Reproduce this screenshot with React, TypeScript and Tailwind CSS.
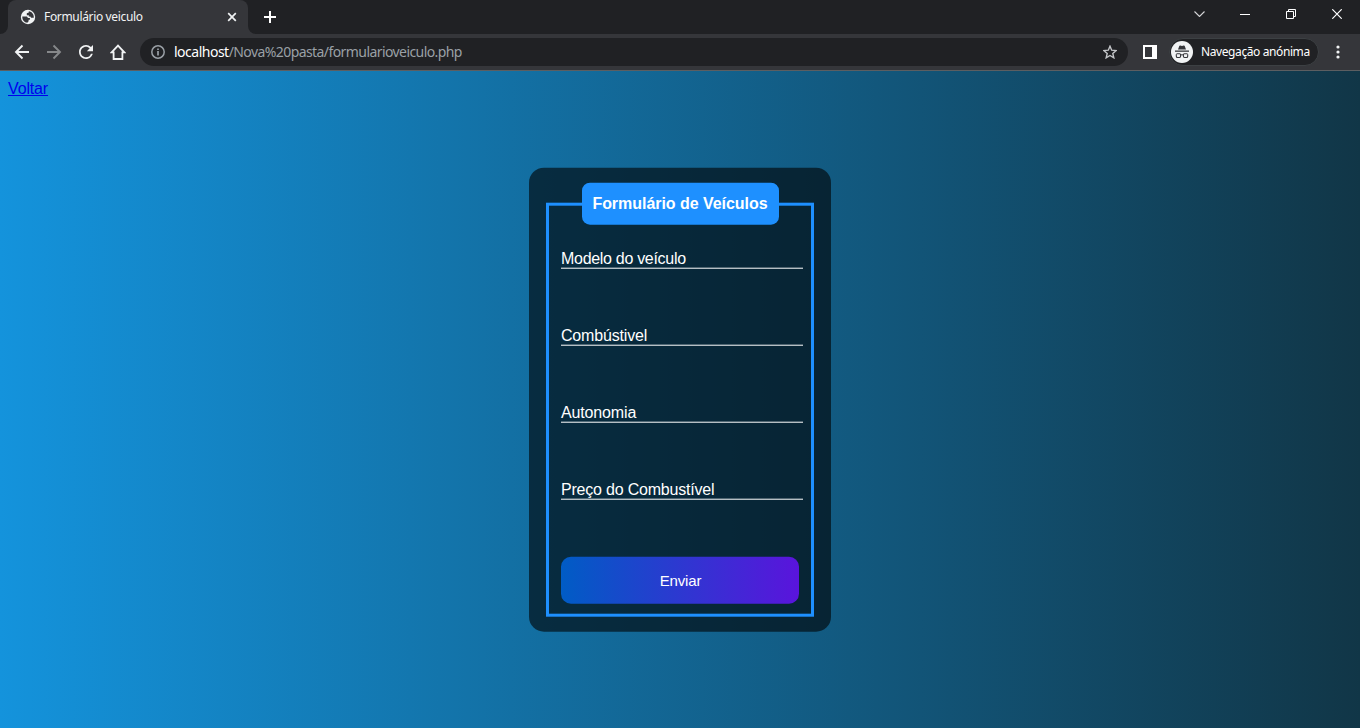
import React from "react";

const fields = [
  { label: "Modelo do veículo", tracking: "tracking-[-0.3px]" },
  { label: "Combústivel", tracking: "tracking-[-0.18px]" },
  { label: "Autonomia", tracking: "tracking-[-0.15px]" },
  { label: "Preço do Combustível", tracking: "tracking-[-0.2px]" },
];

function TabStrip() {
  return (
    <div className="flex h-[34px] shrink-0 items-stretch bg-[#202124]">
      <div className="flex w-2 items-end bg-[#35363a]">
        <div className="h-full w-2 rounded-br-lg bg-[#202124]" />
      </div>
      <div className="flex w-60 items-center rounded-t-lg bg-[#35363a] pl-3">
        <svg className="size-4 shrink-0" viewBox="0 0 16 16">
          <circle cx="8" cy="8" r="7.2" fill="#f1f3f4" />
          <path d="M2.300 7.500h3.900c1 0 1.500.7 1.700 1.500h2v1.800H8.600v1.500l-1.300 1.500C4.200 13.500 2.200 11 2.300 7.500z" fill="#35363a" />
          <path d="M8.800 2.300v1.300L6.800 4.300v1.900h2v1.300h1.500l.8 1.200h2.700c.2-3.200-1.800-6-5-6.400z" fill="#35363a" />
        </svg>
        <span className="ml-2 w-[183px] whitespace-nowrap text-[12px] leading-4 tracking-[-0.34px] text-[#f1f3f4]">Formulário veiculo</span>
        <svg className="size-[10px] shrink-0" viewBox="0 0 10 10" stroke="#f1f3f4" strokeWidth="1.7">
          <path d="M1.200 1.200l7.600 7.600M8.800 1.200l-7.600 7.600" />
        </svg>
      </div>
      <div className="w-2 bg-[#35363a]">
        <div className="h-full w-2 rounded-bl-lg bg-[#202124]" />
      </div>
      <svg className="ml-2 mt-[11px] size-3" viewBox="0 0 12 12" fill="none" stroke="#fff" strokeWidth="2">
        <path d="M6 0v12M0 6h12" />
      </svg>
      <div className="ml-auto flex h-7 items-center text-white">
        <svg className="mr-[35px] h-[6px] w-[11px]" viewBox="0 0 11 6" fill="none" stroke="#d5d6d8" strokeWidth="1.1">
          <path d="M.5.500l5 5 5-5" />
        </svg>
        <svg className="mr-9 h-px w-[10px]" viewBox="0 0 10 1"><path fill="#fff" d="M0 0h10v1H0z" /></svg>
        <svg className="mr-9 size-[10px]" viewBox="0 0 10 10" fill="none" stroke="#fff">
          <path d="M.5 2.500h7v7h-7zM2.500 2V.500h7v7H8" />
        </svg>
        <svg className="mr-[18px] size-[10px]" viewBox="0 0 10 10" stroke="#fff" strokeWidth="1.2">
          <path d="M.3.300l9.400 9.400M9.700.300L.3 9.700" />
        </svg>
      </div>
    </div>
  );
}

function Toolbar() {
  return (
    <div className="flex h-[37px] shrink-0 items-center border-b border-[#5c5e61] bg-[#35363a]">
      <svg className="ml-[14px] size-4" viewBox="0 0 16 16" fill="none" stroke="#f1f3f4" strokeWidth="1.9">
        <path d="M15 8H2.500M8.500 1.500L2 8l6.500 6.500" />
      </svg>
      <svg className="ml-4 size-4" viewBox="0 0 16 16" fill="none" stroke="#86888a" strokeWidth="1.9">
        <path d="M1 8h12.500M7.500 1.500L14 8l-6.500 6.500" />
      </svg>
      <svg className="ml-[17px] size-[14px]" viewBox="4 4 16 16" fill="#f1f3f4">
        <path d="M17.650 6.350A7.960 7.960 0 0 0 12 4c-4.420 0-7.990 3.580-7.990 8s3.570 8 7.990 8c3.730 0 6.840-2.550 7.730-6h-2.080A5.990 5.990 0 0 1 12 18c-3.310 0-6-2.690-6-6s2.690-6 6-6c1.660 0 3.140.69 4.220 1.780L13 11h7V4z" />
      </svg>
      <svg className="ml-[17px] size-4" viewBox="0 0 16 16" fill="none" stroke="#f1f3f4" strokeWidth="1.8">
        <path d="M1.600 8.400L8 1.600l6.400 6.800h-2V15H3.600V8.400z" />
      </svg>
      <div className="ml-[14px] flex h-7 w-[988px] items-center rounded-full bg-[#202124] pl-[11px] pr-[11px]">
        <svg className="size-[14px]" viewBox="0 0 14 14" fill="none" stroke="#9aa0a6" strokeWidth="1.5">
          <circle cx="7" cy="7" r="6.2" />
          <path d="M7 6v4.500M7 3.500v1.500" strokeWidth="1.7" />
        </svg>
        <span className="ml-[9px] whitespace-nowrap text-[14px] leading-5 tracking-[-0.58px] text-[#9aa0a6]"><span className="tracking-[-0.5px] text-white">localhost</span>/Nova%20pasta/formularioveiculo.php</span>
        <svg className="ml-auto size-[14px]" viewBox="0 0 14 14" fill="none" stroke="#c4c6c9" strokeWidth="1.4">
          <path d="M7 1.200l1.700 4 4.400.4-3.300 2.900 1 4.300L7 10.500l-3.800 2.300 1-4.300L.9 5.600l4.400-.4z" />
        </svg>
      </div>
      <svg className="ml-[15px] size-[14px]" viewBox="0 0 14 14">
        <path fill="#fff" fillRule="evenodd" d="M0 0h14v14H0zM2 2v10h7V2z" />
      </svg>
      <div className="ml-3 flex h-7 w-[150px] items-center rounded-full border border-[#3c4043] bg-[#202124] pl-[2px]">
        <svg className="-ml-px size-[22px] shrink-0" viewBox="0 0 22 22">
          <circle cx="11" cy="11" r="11" fill="#f1f3f4" />
          <path d="M7 8.500l1.300-3.500q.2-.6 1-.4l1.700.4 1.700-.4q.8-.2 1 .4L15 8.500z" fill="#35363a" />
          <path d="M4 9.500h14v1.300H4z" fill="#35363a" />
          <path d="M5.500 12.700h3.200q.9 0 .9 1v1.600q0 1.200-1.200 1.200H6.600q-1.300 0-1.300-1.300v-2M16.500 12.700h-3.200q-.9 0-.9 1v1.600q0 1.200 1.200 1.200h1.800q1.300 0 1.300-1.300v-2M9.600 14q1.400-.6 2.800 0" fill="none" stroke="#35363a" strokeWidth="1.1" />
        </svg>
        <span className="ml-2 whitespace-nowrap text-[12px] leading-4 tracking-[-0.4px] text-white">Navegação anónima</span>
      </div>
      <svg className="ml-[17px] h-[14px] w-1" viewBox="0 0 4 14" fill="#f1f3f4">
        <circle cx="2" cy="2" r="1.6" /><circle cx="2" cy="7" r="1.6" /><circle cx="2" cy="12" r="1.6" />
      </svg>
    </div>
  );
}

export default function App() {
  return (
    <div className="flex h-[728px] w-[1360px] flex-col overflow-hidden font-['Noto_Sans','Open_Sans',sans-serif]">
      <TabStrip />
      <Toolbar />
      <main className="flex flex-1 flex-col bg-[linear-gradient(to_right,rgb(20,147,220),rgb(17,54,71))] font-['Liberation_Sans',Arial,sans-serif] text-[16px] leading-[18px]">
        <a href="#" className="ml-2 mt-[9px] self-start tracking-[-0.15px] text-[#0000ee] underline">Voltar</a>
        <form className="mt-[70px] h-[464px] w-[302px] -translate-y-[0.3px] self-center rounded-[15px] bg-black/60 px-[17px] pt-[15px] text-white">
          <fieldset className="h-[434px] w-[268px] min-w-0 border-[3px] border-[#1e90ff] px-3">
            <legend className="mx-auto h-[42px] w-[197px] rounded-lg bg-[#1e90ff] text-center font-bold leading-[42px] tracking-[-0.04px]">Formulário de Veículos</legend>
            <div className="flex w-[242px] flex-col gap-14 pt-[23px]">
              {fields.map(({ label, tracking }) => (
                <label key={label} className={`flex h-[21px] items-end border-b border-white ${tracking}`}>{label}</label>
              ))}
            </div>
            <button type="button" className="mt-[57px] h-[47px] w-[238px] rounded-[10px] bg-[linear-gradient(to_right,rgb(0,92,197),rgb(90,20,220))] pl-px text-[15px] tracking-[-0.15px]">Enviar</button>
          </fieldset>
        </form>
      </main>
    </div>
  );
}
